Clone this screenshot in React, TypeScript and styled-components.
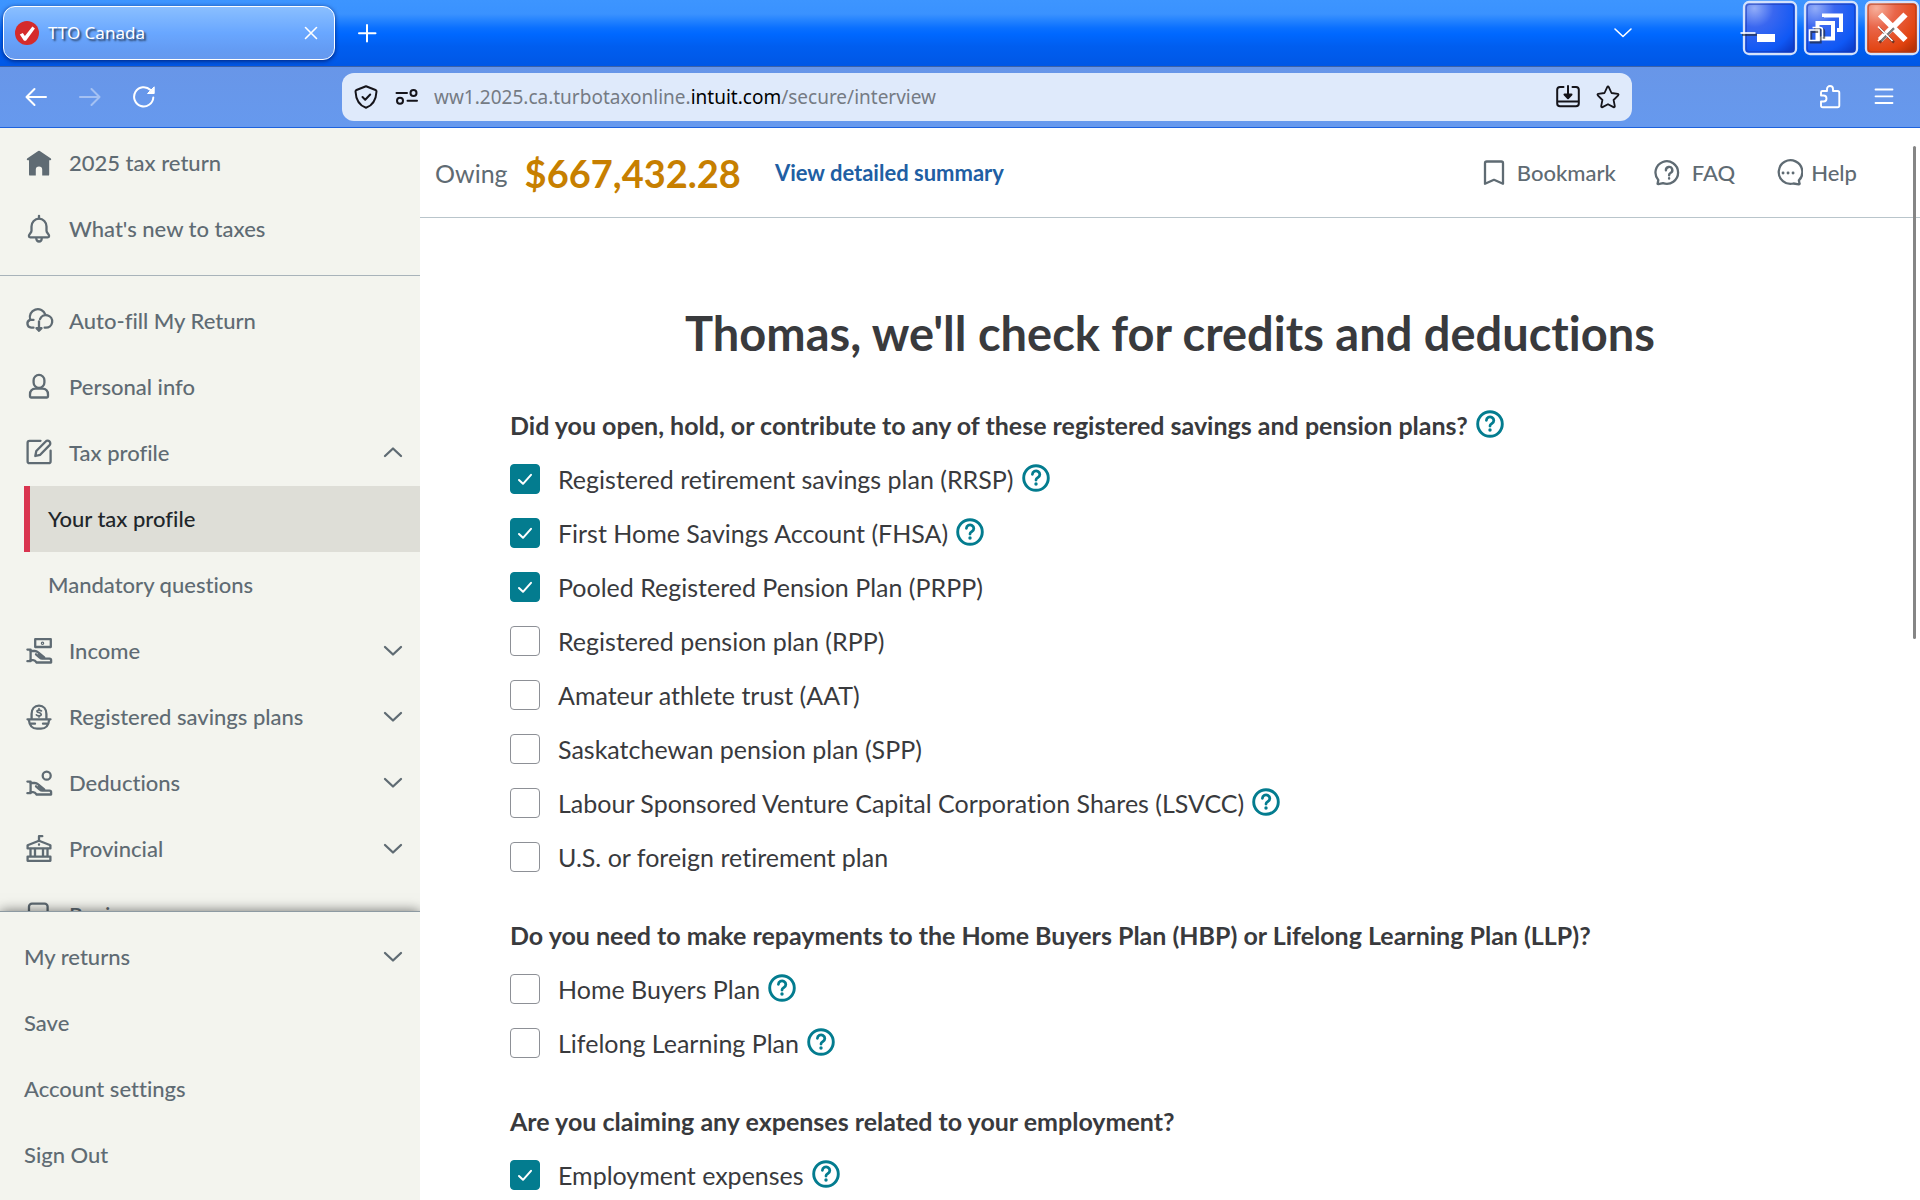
import React, { useId, useState } from "react";
import styled, { createGlobalStyle } from "styled-components";

const uiFont = `"Lato", "Noto Sans", sans-serif`;
const chromeFont = `"Noto Sans", "Open Sans", sans-serif`;
const slate = "#5f6b73";
const ink = "#393a3d";
const teal = "#037c8f";

const GlobalStyle = createGlobalStyle`
  *, *::before, *::after { box-sizing: border-box; }
  body { margin: 0; background: #fff; font-family: ${uiFont}; font-variant-ligatures: none; color: ${ink}; }
  h1, h2, ul { margin: 0; padding: 0; }
  ul { list-style: none; }
  button { border: 0; padding: 0; background: none; color: inherit; font: inherit; font-variant-ligatures: none; cursor: pointer; }
  a { color: inherit; text-decoration: none; }
`;

/* ---------- browser window ---------- */

const Window = styled.div`
  display: flex;
  flex-direction: column;
  height: 100vh;
  overflow: hidden;
`;

const TabStrip = styled.header`
  display: flex;
  align-items: stretch;
  height: 67px;
  flex: none;
  padding-left: 3px;
  color: #fff;
  border-bottom: 1px solid #3c62a8;
  background: linear-gradient(#3d95ff 0, #3a92ff 14px, #0a70ff 28px, #0068ff 34px, #005ef0 46px, #0057e5 66px);
`;

const Tab = styled.div`
  display: flex;
  align-items: center;
  gap: 9px;
  width: 332px;
  margin: 6px 0;
  padding: 0 11px;
  border: 1px solid #fff;
  border-radius: 12px;
  background: linear-gradient(#8abfff, #69a7ff 50%, #649cf4 80%, #6699ee);
  box-shadow: 0 1px 4px rgba(0, 20, 90, 0.8);
`;

const TabTitle = styled.span`
  flex: 1;
  font: 400 17px/24px ${chromeFont};
  text-shadow: 2px 2px 2px rgba(0, 0, 0, 0.65);
`;

const ChromeButton = styled.button<{ $faded?: boolean }>`
  display: grid;
  place-items: center;
  width: 24px;
  flex: none;
  opacity: ${(p) => (p.$faded ? 0.4 : 1)};
`;

const NewTab = styled(ChromeButton)`
  margin-left: 20px;
`;

const ListTabs = styled(ChromeButton)`
  margin-left: auto;
  margin-right: 107px;
`;

const WindowControls = styled.div`
  display: flex;
  gap: 5px;
`;

const WindowButton = styled.button`
  width: 56px;
  height: 56px;
  svg { display: block; overflow: visible; }
`;

const Toolbar = styled.nav`
  display: flex;
  align-items: center;
  height: 61px;
  flex: none;
  color: #fff;
  background: linear-gradient(#6896e8, #6699ee);
  border-bottom: 1px solid #1e62dd;
`;

const NavButtons = styled.div`
  display: flex;
  gap: 30px;
  width: 342px;
  flex: none;
  padding-left: 24px;
`;

const AddressBar = styled.div`
  display: flex;
  align-items: center;
  gap: 16px;
  flex: 1;
  height: 48px;
  padding: 0 12px;
  border-radius: 12px;
  color: #15141a;
  background: #dfeafb;
`;

const Address = styled.span`
  flex: 1;
  font: 400 19px/28px ${chromeFont};
  color: #757b84;
  b { font-weight: 400; color: #000; }
`;

const ToolbarEnd = styled(NavButtons)`
  justify-content: flex-end;
  width: 288px;
  padding: 0 24px;
`;

/* ---------- page ---------- */

const Page = styled.div`
  display: flex;
  flex: 1;
  min-height: 0;
`;

const Sidebar = styled.aside`
  display: flex;
  flex-direction: column;
  width: 420px;
  flex: none;
  overflow: hidden;
  background: #f3f4ee;
  color: ${slate};
  font-size: 22px;
  font-weight: 500;
  line-height: 30px;
`;

const SideScroll = styled.div`
  flex: 1;
  min-height: 0;
  overflow: hidden;
`;

const SideList = styled.ul<{ $ruled?: boolean }>`
  padding: ${(p) => (p.$ruled ? "2px 0 13px" : "12px 0")};
  border-bottom: ${(p) => (p.$ruled ? "1px solid #a8b3ba" : "0")};
`;

const SideFooter = styled.div`
  border-top: 1px solid #8d9aa2;
  background: #f3f4ee;
  box-shadow: 0 0 12px rgba(0, 0, 0, 0.55);
  z-index: 1;
`;

const SideRow = styled.button`
  display: flex;
  align-items: center;
  gap: 15px;
  width: 100%;
  height: 66px;
  padding: 0 15px 0 24px;
  text-align: left;
  svg { flex: none; }
`;

const SideLabel = styled.span`
  flex: 1;
`;

const SubLink = styled.a<{ $current?: boolean }>`
  display: flex;
  align-items: center;
  height: 66px;
  margin-left: 24px;
  padding-left: 18px;
  border-left: 6px solid ${(p) => (p.$current ? "#d9344f" : "transparent")};
  background: ${(p) => (p.$current ? "#deded7" : "transparent")};
  color: ${(p) => (p.$current ? "#21262a" : "inherit")};
`;

const Main = styled.main`
  position: relative;
  flex: 1;
  min-width: 0;
  overflow: hidden;
`;

const SummaryBar = styled.div`
  display: flex;
  align-items: center;
  height: 90px;
  padding: 0 63px 0 15px;
  border-bottom: 1px solid #b9c5cb;
`;

const Owing = styled.span`
  font-size: 25px;
  color: ${slate};
`;

const Amount = styled.strong`
  margin-left: 17px;
  font-size: 38px;
  font-weight: 700;
  line-height: 44px;
  color: #c77f00;
`;

const SummaryLink = styled.a`
  margin-left: 34px;
  font-size: 22px;
  font-weight: 700;
  line-height: 30px;
  color: #205ea3;
`;

const Tools = styled.div`
  display: flex;
  gap: 38px;
  margin-left: auto;
`;

const Tool = styled.button`
  display: flex;
  align-items: center;
  gap: 8px;
  font-size: 22px;
  font-weight: 500;
  line-height: 30px;
  color: ${slate};
`;

const ScrollThumb = styled.div`
  position: absolute;
  top: 18px;
  right: 4px;
  width: 3px;
  height: 46%;
  border-radius: 2px;
  background: #858585;
`;

const Interview = styled.div`
  display: flex;
  flex-direction: column;
  gap: 48px;
  max-width: 1500px;
  margin: 0 auto;
  padding: 86px 90px 0;
`;

const Title = styled.h1`
  font-size: 47px;
  font-weight: 700;
  line-height: 58px;
  text-align: center;
`;

const Section = styled.section`
  display: flex;
  flex-direction: column;
  gap: 24px;
`;

const Line = styled.div`
  display: flex;
  align-items: center;
  gap: 8px;
  height: 30px;
  font-size: 25px;
  line-height: 30px;
`;

const Question = styled.h2`
  font-size: 25px;
  font-weight: 700;
  line-height: 30px;
`;

const CheckWrap = styled.span`
  display: grid;
  margin-right: 10px;
  > * { grid-area: 1 / 1; }
  svg { pointer-events: none; }
`;

const CheckInput = styled.input`
  appearance: none;
  width: 30px;
  height: 30px;
  margin: 0;
  border: 1px solid #8d9096;
  border-radius: 4px;
  background: #fff;
  &:checked { background: ${teal}; border-color: ${teal}; }
`;

const HelpButton = styled.button`
  display: block;
  align-self: flex-start;
  height: 28px;
  color: ${teal};
  svg { display: block; }
`;

/* ---------- drawings ---------- */

const Glyph = ({ size = 24, w = 2, children }: { size?: number; w?: number; children: React.ReactNode }) => (
  <svg width={size} height={size} viewBox={`0 0 ${size} ${size}`} fill="none" stroke="currentColor" strokeWidth={w}
    strokeLinecap="round" strokeLinejoin="round" aria-hidden="true">{children}</svg>
);

const Hand = () => (
  <>
    <path d="M3.4 13.6H6.6V25.2H3.4" />
    <path d="M6.6 15h4.2q1.8 0 3.3 1.3l6.1 5.2" />
    <path d="M12 18.3l3.8 3.4q1 .9 2.4.9H25.5q1.6 0 1.6 1.6v2.3H12.6q-1.6-2.4-3.4-2.4H6.6" />
    <path d="M15 18.6l3.4 3" />
  </>
);

const icons: Record<string, React.ReactNode> = {
  home: <path fill="currentColor" stroke="none" d="M14.2 3.1q.8-.5 1.6 0L26.9 10.6q1 1.5-.6 1.7H25.2V26.4q0 1.2-1.2 1.2H18.2V21.6a3.2 3.2 0 0 0-6.4 0V27.6H6.2q-1.2 0-1.2-1.2V12.3H3.7q-1.6-.2-.6-1.7z" />,
  bell: <><path d="M15 1.8v2.7" /><path d="M7.5 12.5a7.5 7.8 0 0 1 15 0V16.8c0 2.2 2.6 3.2 2.6 5.2q0 1.3-1.3 1.3H6.2q-1.3 0-1.3-1.3c0-2 2.6-3 2.6-5.2z" /><path d="M12.3 24.5a2.7 3 0 0 0 5.4 0" /></>,
  cloud: <><path d="M9.5 21.7H7.2a4 4 0 0 1-1-7.8h3.3" /><path d="M6.2 13.7a8 8 0 0 1 15.2-5" /><path d="M16 13.2a6.3 6.3 0 1 1 5.6 8.5h-1" /><path d="M15 15.5v8" /><path fill="currentColor" d="M12.5 22.2h5L15 24.8z" /></>,
  person: <><rect x="9.6" y="2.9" width="10.8" height="12.9" rx="5.4" /><path d="M6 24.5V22.5q0-5.7 5.7-5.9H18.3q5.7.2 5.7 5.9V24.5q0 1-1 1H7q-1 0-1-1z" /></>,
  edit: <><path d="M16.5 2.8H5.6a2 2 0 0 0-2 2V23.2a2 2 0 0 0 2 2H24.6a2 2 0 0 0 2-2V12.6" /><path d="M11.3 18l1-5L21.7 3.5a2.6 2.6 0 0 1 3.9 3.6L16.2 16.800z" /></>,
  income: <><rect x="11.2" y="3.2" width="15.6" height="7.8" /><circle cx="18.5" cy="7.3" r=".6" /><Hand /></>,
  egg: <><path d="M7.6 16.5V12C7.6 7 10.5 3.7 15 3.7S22.4 7 22.4 12V16.5" /><path d="M3.5 17.3H26.5M4.8 17.5c.6 6 3.6 9.2 8.2 9.2h4c4.600 0 7.600-3.200 8.200-9.200" /><path d="M7 21.7h4M19 21.7h4" /><path strokeWidth="1.7" d="M17.5 8.9q-2.500-1.500-4.300-.3c-1.400 2 3.700 1.700 4 3.700.2 2-3 2.200-4.800.6M15 6.700v1.300M15 13.600v1.300" /></>,
  deductions: <><circle cx="22.7" cy="7.7" r="4" /><Hand /></>,
  provincial: <><path d="M15 6.5V2.2h3.300" /><path d="M3.6 14.4V11.2L15 6.7 26.4 11.2V14.4zM15 10.5v.3" /><path d="M6.5 15v7M11 15v7M19 15v7M23.5 15v7" /><rect x="3.6" y="22.6" width="22.8" height="4.2" /></>,
  review: <rect x="5" y="3.6" width="18.6" height="23" rx="3" />,
  bookmark: <path d="M6 5.200q0-1.700 1.700-1.700H22.300q1.700 0 1.700 1.700V25.800L15 21.800 6 25.800z" />,
  faq: <><path d="M4.300 26.200q-1 0-.6-1l.6-3.200A11.300 11.300 0 1 1 9 25.200z" /><path strokeWidth="2.400" d="M11.900 12.200a3.200 3.200 0 1 1 4.600 2.800q-1.400.7-1.400 2.200M15.100 20.300v.2" /></>,
  help: <><path d="M25.800 26.400q1 0 .7-1l-.6-3A11.800 11.800 0 1 0 20.500 25.500z" /><path d="M10 15h.1M15 15h.1M20 15h.1" strokeWidth="2.800" /></>,
};

const Icon = ({ name }: { name: string }) => <Glyph size={30} w={2.3}>{icons[name]}</Glyph>;

const Chevron = ({ up, w = 2.3 }: { up?: boolean; w?: number }) => (
  <Glyph w={w}><path d={up ? "M4 15L12 7.500L20 15" : "M4 8L12 15.500L20 8"} /></Glyph>
);

const Tick = () => (
  <svg width="30" height="30" viewBox="0 0 30 30" fill="none" stroke="#fff" strokeWidth="2" strokeLinecap="round" strokeLinejoin="round" aria-hidden="true">
    <path d="M9 16l4 3.800L21 10.800" />
  </svg>
);

const Favicon = () => (
  <svg width="24" height="24" viewBox="0 0 24 24" aria-hidden="true">
    <circle cx="12" cy="12" r="12" fill="#d52b2b" />
    <path d="M4.800 13.600l3-1.600 2.100 3L17.400 5.400l2.500 2.200L11 19.800H9z" fill="#fff" />
  </svg>
);

const Outlined = ({ d }: { d: string }) => (
  <>
    <path d={d} fill="none" stroke="#222" strokeOpacity=".6" strokeWidth="2.400" transform="translate(1.500 1.700)" />
    <path d={d} fill="none" stroke="#fff" strokeWidth="1.600" />
  </>
);

const LunaButton = ({ kind }: { kind: "Minimize" | "Restore" | "Close" }) => {
  const id = `luna-${kind}`;
  const red = kind === "Close";
  return (
    <WindowButton aria-label={kind}>
      <svg width="56" height="56" viewBox="0 0 56 56">
        <defs>
          <radialGradient id={id} cx=".2" cy=".12" r="1.050">
            <stop offset="0" stopColor={red ? "#f7b09c" : "#93adf8"} />
            <stop offset=".35" stopColor={red ? "#e9664a" : "#3a67f0"} />
            <stop offset=".8" stopColor={red ? "#e2430f" : "#0f58f5"} />
            <stop offset="1" stopColor={red ? "#b93207" : "#0b3fcf"} />
          </radialGradient>
        </defs>
        <rect x="2" y="2" width="52" height="52" rx="5" fill={`url(#${id})`} stroke="#d5e2fb" strokeWidth="2.300" />
        <rect x="4.200" y="4.200" width="47.600" height="47.600" rx="3" fill="none" stroke={red ? "#a83a1a" : "#1736b0"} strokeOpacity=".55" strokeWidth="1.500" />
        {kind === "Minimize" && <><rect x="15" y="34" width="18" height="8" fill="#fff" /><Outlined d="M-1.500 33H13.500" /></>}
        {kind === "Restore" && (
          <>
            <path d="M21 17V15.500H38V30H34" fill="none" stroke="#fff" strokeWidth="4" />
            <rect x="14.500" y="23" width="15.500" height="15.500" fill="none" stroke="#fff" strokeWidth="4" />
            <Outlined d="M6.500 30H16V40.500H6.500zM9.500 27.500H17Q19.500 27.500 19.500 30V37" />
          </>
        )}
        {kind === "Close" && <><path d="M16 14.500L41.500 40M41.500 14.500L16 40" stroke="#fff" strokeWidth="6" strokeLinecap="butt" /><Outlined d="M14 26.500L28.500 41M28.500 26.500L14 41" /></>}
      </svg>
    </WindowButton>
  );
};

const Help = ({ about }: { about: string }) => (
  <HelpButton aria-label={`Help: ${about}`}>
    <svg width="28" height="28" viewBox="0 0 28 28" fill="none" stroke="currentColor" strokeLinecap="round" aria-hidden="true">
      <circle cx="14" cy="14" r="12.300" strokeWidth="2.900" />
      <path d="M10.400 10.300a3.700 3.500 0 1 1 5.500 3.200q-1.900 1-1.900 2.500" strokeWidth="2.800" />
      <circle cx="14" cy="20" r="1.700" fill="currentColor" stroke="none" />
    </svg>
  </HelpButton>
);

/* ---------- content ---------- */

type Item = { label: string; checked?: boolean; help?: boolean };

const sections: { question: string; help?: boolean; items: Item[] }[] = [
  {
    question: "Did you open, hold, or contribute to any of these registered savings and pension plans?",
    help: true,
    items: [
      { label: "Registered retirement savings plan (RRSP)", checked: true, help: true },
      { label: "First Home Savings Account (FHSA)", checked: true, help: true },
      { label: "Pooled Registered Pension Plan (PRPP)", checked: true },
      { label: "Registered pension plan (RPP)" },
      { label: "Amateur athlete trust (AAT)" },
      { label: "Saskatchewan pension plan (SPP)" },
      { label: "Labour Sponsored Venture Capital Corporation Shares (LSVCC)", help: true },
      { label: "U.S. or foreign retirement plan" },
    ],
  },
  {
    question: "Do you need to make repayments to the Home Buyers Plan (HBP) or Lifelong Learning Plan (LLP)?",
    items: [
      { label: "Home Buyers Plan", help: true },
      { label: "Lifelong Learning Plan", help: true },
    ],
  },
  {
    question: "Are you claiming any expenses related to your employment?",
    items: [{ label: "Employment expenses", checked: true, help: true }],
  },
];

const CheckRow = ({ label, checked, help }: Item) => {
  const id = useId();
  const [on, setOn] = useState(!!checked);
  return (
    <Line>
      <CheckWrap>
        <CheckInput type="checkbox" id={id} checked={on} onChange={() => setOn(!on)} />
        {on && <Tick />}
      </CheckWrap>
      <label htmlFor={id}>{label}</label>
      {help && <Help about={label} />}
    </Line>
  );
};

const SideItem = ({ icon, label, chevron }: { icon?: string; label: string; chevron?: "up" | "down" }) => (
  <li>
    <SideRow>
      {icon && <Icon name={icon} />}
      <SideLabel>{label}</SideLabel>
      {chevron && <Chevron up={chevron === "up"} />}
    </SideRow>
  </li>
);

export default function App() {
  return (
    <>
      <GlobalStyle />
      <Window>
        <TabStrip>
          <Tab>
            <Favicon />
            <TabTitle>TTO Canada</TabTitle>
            <ChromeButton aria-label="Close tab"><Glyph w={1.6}><path d="M6.500 6.500l11 11M17.500 6.500l-11 11" /></Glyph></ChromeButton>
          </Tab>
          <NewTab aria-label="New tab"><Glyph><path d="M12 4v16.500M4 12.300h16.500" /></Glyph></NewTab>
          <ListTabs aria-label="List all tabs"><Chevron w={1.6} /></ListTabs>
          <WindowControls>
            <LunaButton kind="Minimize" />
            <LunaButton kind="Restore" />
            <LunaButton kind="Close" />
          </WindowControls>
        </TabStrip>

        <Toolbar>
          <NavButtons>
            <ChromeButton aria-label="Back"><Glyph><path d="M22 12H3M10.500 4L2.500 12l8 8" /></Glyph></ChromeButton>
            <ChromeButton aria-label="Forward" $faded><Glyph><path d="M2 12h19M13.500 4l8 8-8 8" /></Glyph></ChromeButton>
            <ChromeButton aria-label="Reload">
              <Glyph><path d="M21.300 12.500A9.600 9.600 0 1 1 18.500 5" /><path d="M22.200 2.200v6.300h-6.300z" fill="currentColor" strokeWidth="1" /></Glyph>
            </ChromeButton>
          </NavButtons>
          <AddressBar>
            <ChromeButton aria-label="Site protection">
              <Glyph><path d="M12 1.200L21.500 5q1 .4 1 1.500C22 16 18.500 20.500 12 22.800 5.500 20.500 2 16 1.500 6.500q0-1.100 1-1.500z" /><path d="M8.500 12l2.700 2.700 5-5.200" /></Glyph>
            </ChromeButton>
            <ChromeButton aria-label="Site permissions">
              <Glyph><path d="M2.500 8h10.500M13.500 15.700H23" /><circle cx="19.500" cy="8" r="3" /><circle cx="6" cy="15.700" r="3" /></Glyph>
            </ChromeButton>
            <Address>ww1.2025.ca.turbotaxonline.<b>intuit.com</b>/secure/interview</Address>
            <ChromeButton aria-label="Install page">
              <Glyph><path d="M7.500 2H4Q1.200 2 1.200 4.800V18.500Q1.200 21.300 4 21.300H20Q22.800 21.300 22.800 18.500V4.800Q22.800 2 20 2H16.500M1.500 16.500h21" /><path d="M12 1v9" /><path d="M8.500 9.500h7L12 13.300z" fill="currentColor" /></Glyph>
            </ChromeButton>
            <ChromeButton aria-label="Bookmark this page">
              <Glyph w={1.8}><path d="M12 1.500q.5 0 .8.600L15.500 8l6.300.9q1.200.4.400 1.400L17.600 15l1.200 6.200q0 1.400-1.300.9L12 19.200 6.500 22.100q-1.300.5-1.300-.9L6.400 15 1.800 10.300q-.8-1 .4-1.400L8.500 8l2.700-5.900q.3-.6.8-.6z" /></Glyph>
            </ChromeButton>
          </AddressBar>
          <ToolbarEnd>
            <ChromeButton aria-label="Extensions">
              <Glyph w={1.9}><path d="M3 8V7.500Q3 6 4.500 6H9V4a3 3 0 0 1 6 0V6h4.500Q21.300 6 21.300 7.800V20.500Q21.300 22.300 19.500 22.300H4.800Q3 22.300 3 20.500V16.500H5.500a3 3 0 0 0 0-6H3z" /></Glyph>
            </ChromeButton>
            <ChromeButton aria-label="Menu"><Glyph w={1.8}><path d="M3.500 4.500h17M3.500 11.300h17M3.500 18h17" /></Glyph></ChromeButton>
          </ToolbarEnd>
        </Toolbar>

        <Page>
          <Sidebar>
            <SideScroll>
              <SideList $ruled>
                <SideItem icon="home" label="2025 tax return" />
                <SideItem icon="bell" label="What's new to taxes" />
              </SideList>
              <SideList>
                <SideItem icon="cloud" label="Auto-fill My Return" />
                <SideItem icon="person" label="Personal info" />
                <SideItem icon="edit" label="Tax profile" chevron="up" />
                <li><SubLink href="#" $current>Your tax profile</SubLink></li>
                <li><SubLink href="#">Mandatory questions</SubLink></li>
                <SideItem icon="income" label="Income" chevron="down" />
                <SideItem icon="egg" label="Registered savings plans" chevron="down" />
                <SideItem icon="deductions" label="Deductions" chevron="down" />
                <SideItem icon="provincial" label="Provincial" chevron="down" />
                <SideItem icon="review" label="Review" />
              </SideList>
            </SideScroll>
            <SideFooter>
              <SideList>
                <SideItem label="My returns" chevron="down" />
                <SideItem label="Save" />
                <SideItem label="Account settings" />
                <SideItem label="Sign Out" />
              </SideList>
            </SideFooter>
          </Sidebar>

          <Main>
            <SummaryBar>
              <Owing>Owing</Owing>
              <Amount>$667,432.28</Amount>
              <SummaryLink href="#">View detailed summary</SummaryLink>
              <Tools>
                <Tool><Icon name="bookmark" />Bookmark</Tool>
                <Tool><Icon name="faq" />FAQ</Tool>
                <Tool><Icon name="help" />Help</Tool>
              </Tools>
            </SummaryBar>
            <Interview>
              <Title>Thomas, we'll check for credits and deductions</Title>
              {sections.map((s) => (
                <Section key={s.question}>
                  <Line>
                    <Question>{s.question}</Question>
                    {s.help && <Help about={s.question} />}
                  </Line>
                  {s.items.map((item) => <CheckRow key={item.label} {...item} />)}
                </Section>
              ))}
            </Interview>
            <ScrollThumb />
          </Main>
        </Page>
      </Window>
    </>
  );
}
